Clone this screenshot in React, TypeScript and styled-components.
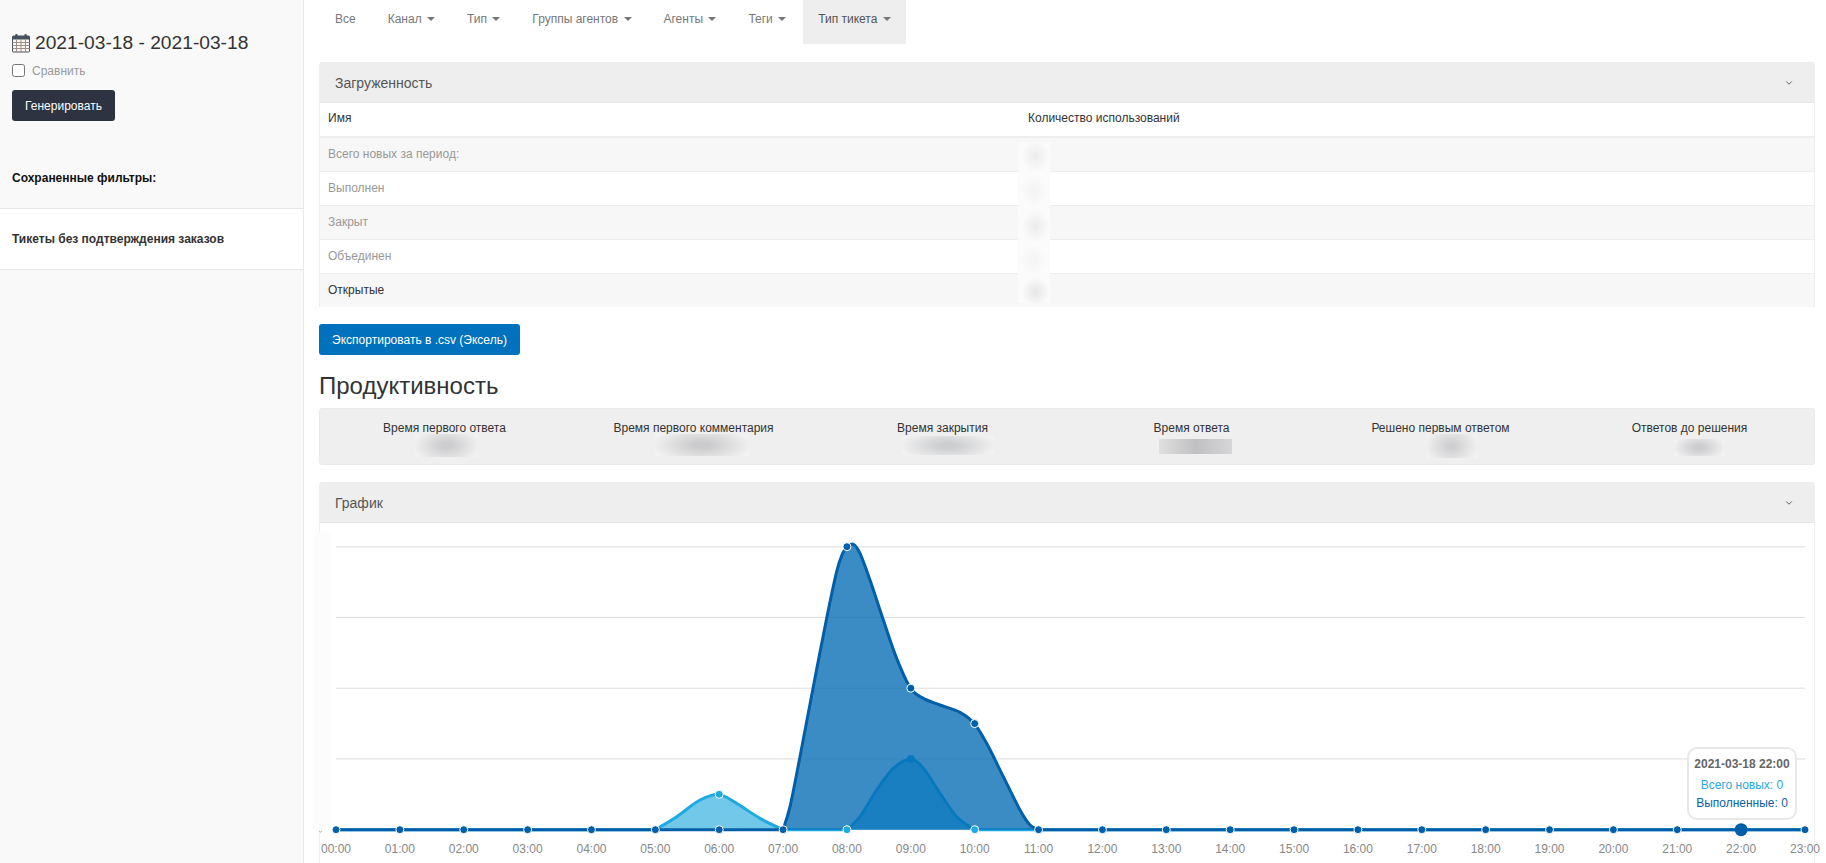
import React from 'react';
import styled, { createGlobalStyle } from 'styled-components';
import { ChevronDown } from 'lucide-react';

const Global = createGlobalStyle`
  html, body { margin: 0; padding: 0; height: 100%; background: #fff; overflow: hidden; }
  body { font-family: "Liberation Sans", Arial, sans-serif; font-size: 12px; color: #333; }
  * { box-sizing: border-box; }
`;

const Page = styled.div`
  display: flex;
  width: 1826px;
  height: 863px;
  overflow: hidden;
`;

const Sidebar = styled.aside`
  flex: 0 0 304px;
  background: #f9f9f9;
  border-right: 1px solid #eaeaea;
  padding-top: 33px;
`;

const DateBlock = styled.div`
  padding: 0 12px;
`;

const DateTitle = styled.h3`
  display: flex;
  align-items: center;
  gap: 4px;
  margin: 0;
  height: 20px;
  font-size: 19.2px;
  font-weight: 400;
  color: #333;
  white-space: nowrap;
`;

const CompareRow = styled.label`
  display: flex;
  align-items: center;
  gap: 7px;
  margin-top: 11px;
  height: 13px;
  color: #999;
  font-size: 12px;
`;

const CompareBox = styled.input`
  width: 13px;
  height: 13px;
  margin: 0;
`;

const GenerateButton = styled.button`
  display: block;
  margin-top: 13px;
  width: 103px;
  height: 31px;
  padding: 0;
  border: 0;
  border-radius: 3px;
  background: #2d3340;
  color: #fff;
  font: 12px "Liberation Sans", Arial, sans-serif;
`;

const FiltersTitle = styled.div`
  margin-top: 49px;
  padding: 0 12px;
  font-weight: 700;
  color: #111;
  line-height: 16px;
`;

const SavedFilter = styled.div`
  margin-top: 22px;
  height: 62px;
  display: flex;
  align-items: center;
  padding: 0 12px;
  background: #fff;
  border-top: 1px solid #e8e8e8;
  border-bottom: 1px solid #e8e8e8;
  font-weight: 700;
  color: #333;
`;

const Main = styled.main`
  flex: 1;
  min-width: 0;
  padding: 0 11px 0 15px;
`;

const Tabs = styled.nav`
  display: flex;
  gap: 2px;
  height: 44px;
  padding-left: 1px;
`;

const Tab = styled.a<{ $active?: boolean }>`
  display: flex;
  align-items: center;
  height: 44px;
  padding: 0 15px 6px;
  color: ${p => (p.$active ? '#555' : '#777')};
  background: ${p => (p.$active ? '#eee' : 'transparent')};
  white-space: pre;
`;

const Caret = styled.span`
  display: inline-block;
  width: 0;
  height: 0;
  margin-left: 2px;
  border-top: 4px solid #777;
  border-left: 4px solid transparent;
  border-right: 4px solid transparent;
`;

const Panel = styled.section<{ $gap: number }>`
  position: relative;
  margin-top: ${p => p.$gap}px;
  border: 1px solid #eee;
  border-bottom: 0;
  border-radius: 3px 3px 0 0;
  background: #fff;
`;

const PanelHeader = styled.header`
  display: flex;
  align-items: center;
  justify-content: space-between;
  height: 40px;
  padding: 0 20px 0 15px;
  background: #eee;
  border-bottom: 1px solid #e6e6e6;
  font-size: 14px;
  color: #555;
`;

const Chevron = styled(ChevronDown)`
  color: #444;
  width: 10px;
  height: 10px;
`;

const TableGrid = styled.div`
  position: relative;
`;

const HeadRow = styled.div`
  display: grid;
  grid-template-columns: 700px 1fr;
  height: 35px;
  align-items: center;
  padding: 0 0 3px 8px;
  border-bottom: 2px solid #eee;
  color: #333;
`;

const BodyRow = styled.div<{ $odd?: boolean; $strong?: boolean }>`
  height: 34px;
  display: grid;
  grid-template-columns: 700px 1fr;
  align-items: center;
  padding: 0 0 1px 8px;
  border-top: 1px solid #eee;
  background: ${p => (p.$odd ? '#f7f7f7' : '#fff')};
  color: ${p => (p.$strong ? '#333' : '#999')};
  ${HeadRow} + & { border-top: 0; height: 33px; }
`;

const ColumnRedaction = styled.div`
  position: absolute;
  left: 698px;
  top: 39px;
  width: 32px;
  height: 161px;
  background:
    radial-gradient(ellipse 14px 17px at 55% 14px, #ececec, transparent),
    radial-gradient(ellipse 13px 16px at 50% 49px, #f3f3f3, transparent),
    radial-gradient(ellipse 14px 17px at 55% 84px, #ececec, transparent),
    radial-gradient(ellipse 13px 16px at 50% 118px, #f4f4f4, transparent),
    radial-gradient(ellipse 14px 15px at 55% 150px, #e6e6e6, transparent),
    #fbfbfb;
`;

const ExportButton = styled.button`
  display: block;
  margin-top: 17px;
  width: 201px;
  height: 31px;
  padding: 0;
  border: 0;
  border-radius: 3px;
  background: #0071bc;
  color: #fff;
  font: 12px "Liberation Sans", Arial, sans-serif;
`;

const Heading = styled.h2`
  margin: 16px 0 0;
  height: 37px;
  line-height: 30px;
  font-size: 24px;
  font-weight: 400;
  color: #333;
`;

const Metrics = styled.div`
  display: grid;
  grid-template-columns: repeat(6, 1fr);
  height: 57px;
  padding-top: 12px;
  background: #efefef;
  border: 1px solid #eaeaea;
  border-radius: 3px;
`;

const Metric = styled.div`
  display: flex;
  flex-direction: column;
  align-items: center;
  color: #333;
  line-height: 14px;
`;

const Redaction = styled.div<{ $w: number; $h: number; $top: number; $tone: string; $dx?: number }>`
  width: ${p => p.$w}px;
  height: ${p => p.$h}px;
  margin-top: ${p => p.$top}px;
  margin-left: ${p => p.$dx ?? 0}px;
  background: radial-gradient(ellipse 55% 85% at 50% 50%, ${p => p.$tone} 15%, #f3f3f3 100%);
`;

const BarRedaction = styled.div`
  width: 73px;
  height: 15px;
  margin-top: 4px;
  margin-left: 7px;
  background: linear-gradient(90deg, #e0e0e0, #c0c0c2 50%, #d6d6d8);
`;

const ChartPanelBody = styled.div`
  position: relative;
  height: 340px;
`;

const ChartSvg = styled.svg`
  display: block;
  overflow: visible;
`;

const AxisBlur = styled.div`
  position: absolute;
  left: -4px;
  top: 12px;
  width: 12px;
  height: 292px;
  background: #fcfcfc;
  box-shadow: 0 0 4px 3px #fcfcfc;
`;

const ChartTooltip = styled.div`
  position: absolute;
  left: 1367px;
  top: 224px;
  width: 110px;
  height: 73px;
  padding-top: 6px;
  border: 2px solid #e8e8e8;
  border-radius: 10px;
  background: rgba(255, 255, 255, 0.85);
  text-align: center;
  line-height: 18px;
  font-size: 12px;
`;

const TooltipTitle = styled.div`
  font-weight: 700;
  color: #666;
  margin-bottom: 3px;
`;

const TooltipRow = styled.div<{ $color: string }>`
  color: ${p => p.$color};
`;

const CalendarIcon = () => (
  <svg width="19" height="20" viewBox="0 0 19 20" style={{ flex: 'none' }}>
    <rect x="0.5" y="3" width="17" height="16" rx="1" fill="#fdf6f0" stroke="#46525f" />
    <rect x="0.5" y="3" width="17" height="3.5" fill="#46525f" />
    <path d="M0.5 9.5h17M0.5 12.5h17M0.5 15.5h17M4.5 7v12M9 7v12M13.5 7v12" stroke="#9a8f8c" strokeWidth="1" />
    <rect x="3.2" y="1" width="2.4" height="4" rx="1" fill="#46525f" />
    <rect x="12.4" y="1" width="2.4" height="4" rx="1" fill="#46525f" />
  </svg>
);

type Pt = [number, number];

const X0 = 16;
const DX = 63.87;
const BASE = 306.7;
const UNIT = 70.75;
const px = (i: number) => X0 + DX * i;
const py = (v: number) => BASE - v * UNIT;

const fromBig = (pts: Pt[]): Pt[] => pts.map(([x, y]) => [440 + x / 3, 7 + y / 3]);
const fromLow = (pts: Pt[]): Pt[] => pts.map(([x, y]) => [-20 + x / 3, 217 + y / 3]);

const DARK_BUMP = fromBig([
  [69, 899], [90, 830], [120, 680], [160, 470], [200, 265], [230, 125], [248, 70], [261, 50], [280, 43], [300, 70],
  [330, 150], [370, 270], [410, 385], [452, 475], [490, 505], [540, 525], [600, 547], [643, 581], [680, 640],
  [730, 740], [780, 840], [810, 885], [835, 899],
]);
const LIGHT_BUMP_A = fromLow([
  [1066, 269], [1130, 230], [1200, 180], [1258, 164], [1310, 190], [1380, 235], [1449, 269],
]);
const LIGHT_BUMP_B = fromBig([
  [261, 899], [300, 860], [350, 780], [400, 715], [452, 688], [490, 715], [540, 790], [590, 860], [643, 899],
]);

function spline(pts: Pt[]): string {
  let d = '';
  for (let i = 1; i < pts.length; i++) {
    const p0 = pts[Math.max(i - 2, 0)];
    const p1 = pts[i - 1];
    const p2 = pts[i];
    const p3 = pts[Math.min(i + 1, pts.length - 1)];
    d += `C${p1[0] + (p2[0] - p0[0]) / 6},${p1[1] + (p2[1] - p0[1]) / 6} ${p2[0] - (p3[0] - p1[0]) / 6},${p2[1] - (p3[1] - p1[1]) / 6} ${p2[0]},${p2[1]}`;
  }
  return d;
}

const darkLine = `M${X0},${BASE}L${px(7)},${BASE}${spline(DARK_BUMP)}L${px(23)},${BASE}`;
const lightLine = `M${X0},${BASE}L${px(5)},${BASE}${spline(LIGHT_BUMP_A)}L${px(8)},${BASE}${spline(LIGHT_BUMP_B)}L${px(23)},${BASE}`;

const closeArea = (d: string) => `${d}Z`;

const DARK_Y = [0, 0, 0, 0, 0, 0, 0, 0, 4, 2, 1.5, 0, 0, 0, 0, 0, 0, 0, 0, 0, 0, 0, 0, 0];

const DARK_C = '#005fa8';
const LIGHT_C = '#1fa9e1';
const FONT = '"Liberation Sans", Arial, sans-serif';

const Chart = () => (
  <ChartSvg width="1495" height="340" viewBox="0 0 1495 340">
    {[0, 1, 2, 3].map(i => (
      <line key={i} x1={X0} x2={px(23)} y1={py(i + 1)} y2={py(i + 1)} stroke={i === 3 ? '#e8e8e8' : '#dcdcdc'} strokeWidth={i === 3 ? 1.6 : 1} />
    ))}
    <path d="M-1,308q1.5,2 3,0" fill="none" stroke="#999" />
    <path d={closeArea(lightLine)} fill="rgb(26,166,220)" fillOpacity="0.62" />
    <path d={lightLine} fill="none" stroke={LIGHT_C} strokeWidth="3" />
    <circle cx={px(9)} cy={py(1)} r="4" fill={LIGHT_C} />
    <path d={closeArea(darkLine)} fill="#0069b4" fillOpacity="0.77" />
    <circle cx={px(6)} cy={py(0.5)} r="4" fill={LIGHT_C} stroke="#fff" />
    {[8, 10].map(i => (
      <circle key={i} cx={px(i)} cy={BASE} r="4" fill={LIGHT_C} stroke="#fff" />
    ))}
    <path d={darkLine} fill="none" stroke={DARK_C} strokeWidth="3" />
    {DARK_Y.map((v, i) =>
      i === 22 ? null : <circle key={i} cx={px(i)} cy={py(v)} r="4" fill={DARK_C} stroke="#fff" />
    )}
    <circle cx={px(22)} cy={BASE} r="6.5" fill={DARK_C} />
    {DARK_Y.map((_, i) => (
      <text key={i} x={px(i)} y={330} textAnchor="middle" fontSize="12" fill="#888" fontFamily={FONT}>
        {String(i).padStart(2, '0')}:00
      </text>
    ))}
  </ChartSvg>
);

const tabs: { label: string; caret: boolean; active?: boolean }[] = [
  { label: 'Все', caret: false },
  { label: 'Канал ', caret: true },
  { label: 'Тип ', caret: true },
  { label: 'Группы агентов ', caret: true },
  { label: 'Агенты ', caret: true },
  { label: 'Теги ', caret: true },
  { label: 'Тип тикета ', caret: true, active: true },
];

const rows = ['Всего новых за период:', 'Выполнен', 'Закрыт', 'Объединен', 'Открытые'];

export default function App() {
  return (
    <Page>
      <Global />
      <Sidebar>
        <DateBlock>
          <DateTitle>
            <CalendarIcon />
            2021-03-18 - 2021-03-18
          </DateTitle>
          <CompareRow>
            <CompareBox type="checkbox" />
            Сравнить
          </CompareRow>
          <GenerateButton>Генерировать</GenerateButton>
        </DateBlock>
        <FiltersTitle>Сохраненные фильтры:</FiltersTitle>
        <SavedFilter>Тикеты без подтверждения заказов</SavedFilter>
      </Sidebar>
      <Main>
        <Tabs>
          {tabs.map(t => (
            <Tab key={t.label} $active={t.active}>
              {t.label}
              {t.caret && <Caret />}
            </Tab>
          ))}
        </Tabs>
        <Panel $gap={18}>
          <PanelHeader>
            Загруженность
            <Chevron strokeWidth={2} />
          </PanelHeader>
          <TableGrid>
            <HeadRow>
              <span>Имя</span>
              <span>Количество использований</span>
            </HeadRow>
            {rows.map((r, i) => (
              <BodyRow key={r} $odd={i % 2 === 0} $strong={i === 4}>
                <span>{r}</span>
              </BodyRow>
            ))}
            <ColumnRedaction />
          </TableGrid>
        </Panel>
        <ExportButton>Экспортировать в .csv (Эксель)</ExportButton>
        <Heading>Продуктивность</Heading>
        <Metrics>
          <Metric>
            Время первого ответа
            <Redaction $w={63} $h={23} $top={-1} $tone="#cdcdcf" $dx={3} />
          </Metric>
          <Metric>
            Время первого комментария
            <Redaction $w={94} $h={22} $top={-1} $tone="#cbcbcd" $dx={16} />
          </Metric>
          <Metric>
            Время закрытия
            <Redaction $w={92} $h={19} $top={1} $tone="#cccdcf" $dx={10} />
          </Metric>
          <Metric>
            Время ответа
            <BarRedaction />
          </Metric>
          <Metric>
            Решено первым ответом
            <Redaction $w={51} $h={24} $top={-1} $tone="#d0d0d2" $dx={21} />
          </Metric>
          <Metric>
            Ответов до решения
            <Redaction $w={50} $h={17} $top={4} $tone="#cccccf" $dx={18} />
          </Metric>
        </Metrics>
        <Panel $gap={17}>
          <PanelHeader>
            График
            <Chevron strokeWidth={2} />
          </PanelHeader>
          <ChartPanelBody>
            <Chart />
            <AxisBlur />
            <ChartTooltip>
              <TooltipTitle>2021-03-18 22:00</TooltipTitle>
              <TooltipRow $color="#2aa8e0">Всего новых: 0</TooltipRow>
              <TooltipRow $color="#0b5fa5">Выполненные: 0</TooltipRow>
            </ChartTooltip>
          </ChartPanelBody>
        </Panel>
      </Main>
    </Page>
  );
}
